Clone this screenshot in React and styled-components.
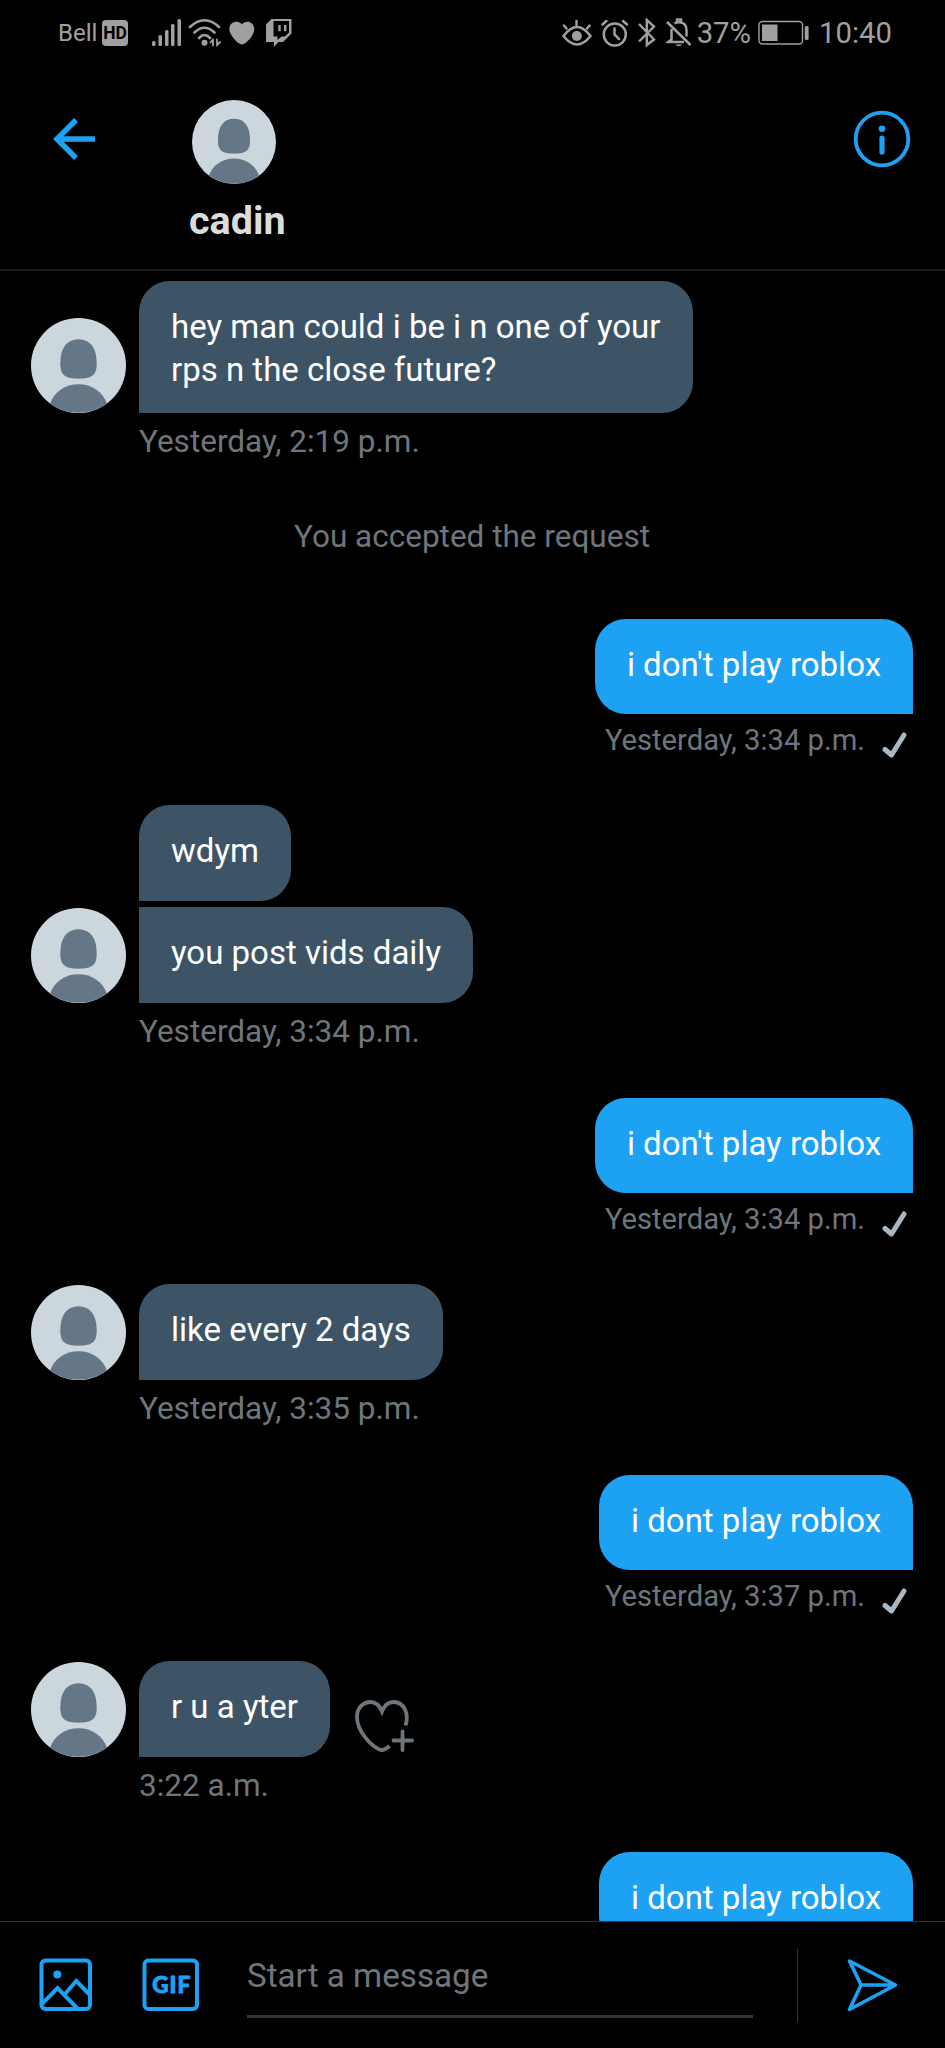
import React from "react"
import styled, { createGlobalStyle } from 'styled-components';

const GlobalStyle = createGlobalStyle`
* { box-sizing: border-box; }
body {
margin: 0;
background: #000;
font-family: Roboto, "Liberation Sans", sans-serif;
}
`;

const conversation = [
	{ id: 1, from: 'them', multiline: true, texts: ['hey man could i be i n one of your\nrps n the close future?'], time: 'Yesterday, 2:19 p.m.' },
	{ id: 2, notice: 'You accepted the request' },
	{ id: 3, from: 'me', texts: ["i don't play roblox"], time: 'Yesterday, 3:34 p.m.' },
	{ id: 4, from: 'them', texts: ['wdym', 'you post vids daily'], time: 'Yesterday, 3:34 p.m.' },
	{ id: 5, from: 'me', texts: ["i don't play roblox"], time: 'Yesterday, 3:34 p.m.' },
	{ id: 6, from: 'them', texts: ['like every 2 days'], time: 'Yesterday, 3:35 p.m.' },
	{ id: 7, from: 'me', texts: ['i dont play roblox'], time: 'Yesterday, 3:37 p.m.' },
	{ id: 8, from: 'them', texts: ['r u a yter'], time: '3:22 a.m.', react: true },
	{ id: 9, from: 'me', texts: ['i dont play roblox'] },
];

const Avatar = ({ size }) => (
	<StyledAvatar $size={size} viewBox="0 0 94 94">
		<circle cx="47" cy="47" r="47" fill="#ccd6dd" />
		<path d="M47 21c-12 0-18 9-18 24 0 11 4 15 18 15s18-4 18-15c0-15-6-24-18-24z" fill="#657786" />
		<path d="M19 84.600C23 73 34 65.500 47 65.500S71 73 75 84.600A47 47 0 0 1 19 84.600z" fill="#657786" />
	</StyledAvatar>
);

const StatusIcons = () => (
	<>
		<StyledIcon $w={30} $h={30} $ml={24} viewBox="0 0 30 30" fill="#a0a0a0">
			<rect x="0" y="23" width="3.500" height="5" rx="1.500" />
			<rect x="6.500" y="17" width="3.500" height="11" rx="1.500" />
			<rect x="13" y="12" width="3.500" height="16" rx="1.500" />
			<rect x="19" y="6" width="3.500" height="22" rx="1.500" />
			<rect x="25.500" y="1" width="3.500" height="27" rx="1.500" />
		</StyledIcon>
		<StyledIcon $w={34} $h={30} $ml={6} viewBox="0 0 34 30" fill="none" stroke="#a0a0a0" strokeWidth="2.600" strokeLinecap="round">
			<path d="M2 9Q16.500-4.500 31 9M6.500 14.500Q16.500 5 26.500 14.500M11 20Q16.500 14 22 20" />
			<circle cx="16.500" cy="24.700" r="3" fill="#a0a0a0" stroke="none" />
			<path d="M25 21.500v6M25 21.500l-2.500 3M29 21.500v6M29 27l3-3" strokeWidth="1.800" />
		</StyledIcon>
		<StyledIcon $w={26} $h={24} $ml={7} viewBox="0 0 26 24" fill="#a0a0a0">
			<path d="M13 3.500C10-1 1-.500 .300 7.500 0 14 9 23.500 13 23.500S26 14 25.200 7.500C24.500-.500 16-1 13 3.500z" />
		</StyledIcon>
		<StyledIcon $w={26} $h={30} $ml={11} viewBox="0 0 26 30" fill="#a0a0a0">
			<path fillRule="evenodd" d="M5.500 1H25.500V15.500L17 24H12.500L8 29V24H0V6.500zM7.500 3V18.500H11.500V22L15.500 18.500H19L23 14.500V3z" />
			<path d="M12.300 7h2.400v6.300h-2.400zM18 7h2.400v6.300H18z" />
		</StyledIcon>
	</>
);

const EyeIcon = () => (
	<StyledIcon $w={30} $h={28} viewBox="0 0 30 28" fill="none" stroke="#a0a0a0" strokeWidth="2.500" strokeLinecap="round">
		<path d="M1.500 17Q15-1 28.500 17Q15 34 1.500 17zM14.500 6V2M4.500 9.500L2 6.500M25 9.500l2.500-3" />
		<circle cx="14.800" cy="17" r="5" fill="#a0a0a0" stroke="none" />
	</StyledIcon>
);

const AlarmIcon = () => (
	<StyledIcon $w={28} $h={28} $ml={9} viewBox="0 0 28 28" fill="none" stroke="#a0a0a0" strokeWidth="2.500" strokeLinecap="round">
		<circle cx="13.800" cy="15.500" r="11" />
		<path d="M13.500 9.500v6l4.500 4.500M1.500 5.500L5.500 2M26 5.500L22 2" />
	</StyledIcon>
);

const BluetoothIcon = () => (
	<StyledIcon $w={20} $h={30} $ml={8} viewBox="0 0 20 30" fill="none" stroke="#a0a0a0" strokeWidth="2.400">
		<path d="M2 6L17 21.500L9.800 27V2L17 8.500L2 23.500" />
	</StyledIcon>
);

const MutedIcon = () => (
	<StyledIcon $w={26} $h={30} $ml={9} viewBox="0 0 26 30" fill="none" stroke="#a0a0a0" strokeWidth="2.500">
		<path d="M1 4L24.500 27M5.500 11V21.500L2 24H18M8.500 5.500C9.500 4.500 11 4.200 13 4.200C18 4.200 20.500 7.500 20.500 12V18.500M11 4V1.500h4V4" />
		<path d="M9.500 26.500h6.500c-.800 2.300-5.700 2.300-6.500 0z" fill="#a0a0a0" stroke="none" />
	</StyledIcon>
);

const BatteryIcon = () => (
	<StyledIcon $w={52} $h={26} $ml={7} viewBox="0 0 52 26" fill="none" stroke="#a0a0a0">
		<rect x="1" y="1.500" width="43.500" height="22.500" rx="3.500" strokeWidth="1.400" />
		<rect x="4" y="4.500" width="15.500" height="16.500" fill="#a0a0a0" stroke="none" />
		<rect x="46.800" y="6" width="3.800" height="14" rx="1.500" fill="#a0a0a0" stroke="none" />
	</StyledIcon>
);

const HeartPlus = () => (
	<StyledHeart viewBox="0 0 60 54" fill="none" stroke="#6e767d" strokeWidth="3.800">
		<path d="M50.500 25.500C54 15 50 2 38.500 2C33 2 29.500 5.500 27 11.500C24.500 5.500 21 2 15.500 2C8 2 2 8 2 17C2 31 16 46 24.500 49.500C27.500 51 31 49 34.500 46" />
		<path d="M47.500 31.500V50M38.500 40.500H57" strokeLinecap="round" />
	</StyledHeart>
);

const Message = ({ item }) => {
	if (item.notice) {
		return <StyledNotice>{item.notice}</StyledNotice>
	}
	if (item.from === 'me') {
		return (
			<StyledSent>
				{item.texts.map((text) => <StyledSentBubble key={text}>{text}</StyledSentBubble>)}
				{item.time && (
					<StyledSentTime>
						{item.time}
						<StyledCheck viewBox="0 0 26 28" fill="none" stroke="#aab8c2" strokeWidth="5" strokeLinecap="round" strokeLinejoin="round">
							<path d="M3 18.500L9.500 24L22 4" />
						</StyledCheck>
					</StyledSentTime>
				)}
			</StyledSent>
		)
	}
	return (
		<StyledReceived>
			<StyledReceivedRow>
				<Avatar size={95} />
				<StyledStack>
					{item.texts.map((text, i) => (
						<StyledReceivedBubble key={text} $first={i === 0} $multiline={item.multiline}>{text}</StyledReceivedBubble>
					))}
				</StyledStack>
				{item.react && <HeartPlus />}
			</StyledReceivedRow>
			<StyledReceivedTime>{item.time}</StyledReceivedTime>
		</StyledReceived>
	)
}

export default function App() {
	return (
		<>
			<GlobalStyle />
			<StyledScreen>
				<StyledStatusBar>
					<StyledCarrier>Bell</StyledCarrier>
					<StyledHd>HD</StyledHd>
					<StatusIcons />
					<StyledStatusRight>
						<EyeIcon />
						<AlarmIcon />
						<BluetoothIcon />
						<MutedIcon />
						<StyledStatusText $ml={5}>37%</StyledStatusText>
						<BatteryIcon />
						<StyledStatusText $ml={9}>10:40</StyledStatusText>
					</StyledStatusRight>
				</StyledStatusBar>
				<StyledHeader>
					<StyledBack viewBox="0 0 44 42" fill="none" stroke="#1da1f2" strokeWidth="5.500">
						<path d="M43 21H5M24 2L5 21L24 40" />
					</StyledBack>
					<StyledProfile>
						<StyledProfilePicture>
							<Avatar size={84} />
						</StyledProfilePicture>
						<StyledName>cadin</StyledName>
					</StyledProfile>
					<StyledInfo viewBox="0 0 58 58" fill="none" stroke="#1da1f2">
						<circle cx="29" cy="29" r="26.300" strokeWidth="3.800" />
						<circle cx="29" cy="18.800" r="3.300" fill="#1da1f2" stroke="none" />
						<path d="M29 28.200V42" strokeWidth="5.200" strokeLinecap="round" />
					</StyledInfo>
				</StyledHeader>
				<StyledThread>
					{conversation.map((item) => <Message key={item.id} item={item} />)}
				</StyledThread>
				<StyledComposer>
					<StyledTool $w={54} $ml={39} viewBox="0 0 54 54" fill="none" stroke="#1da1f2" strokeWidth="4">
						<rect x="2.500" y="2.500" width="48.500" height="48.500" rx="4" />
						<circle cx="18.300" cy="16.500" r="4" fill="#1da1f2" stroke="none" />
						<path d="M3 46L18.500 30L39 51M25.500 36.500L37.300 23L51 37" />
					</StyledTool>
					<StyledTool $w={58} $ml={49} viewBox="0 0 58 54" fill="none" stroke="#1da1f2" strokeWidth="4">
						<rect x="2.500" y="2.500" width="52.500" height="48.500" rx="4" />
						<text x="29.200" y="34.500" fontFamily="Lato" fontWeight="900" fontSize="22.500" textAnchor="middle" textLength="38" fill="#1da1f2" strokeWidth="1">GIF</text>
					</StyledTool>
					<StyledInput>Start a message</StyledInput>
					<StyledDivider />
					<StyledTool $w={52} $ml={48} viewBox="0 0 52 54" fill="none" stroke="#1da1f2" strokeWidth="3.600" strokeLinejoin="round">
						<path d="M3.500 3L49.500 27L3.500 51.500L15 27zM15 27H49" />
					</StyledTool>
				</StyledComposer>
			</StyledScreen>
		</>
	);
}

const StyledScreen = styled.div`
width: 945px;
height: 2048px;
display: flex;
flex-direction: column;
overflow: hidden;
background: #000;
`;

const StyledStatusBar = styled.div`
height: 66px;
padding-left: 58px;
display: flex;
align-items: center;
color: #a0a0a0;
`;

const StyledCarrier = styled.div`
width: 44px;
font-size: 24px;
`;

const StyledHd = styled.div`
width: 26px;
height: 26px;
border-radius: 4px;
background: #a0a0a0;
color: #000;
font-size: 17.5px;
font-weight: 700;
line-height: 27px;
text-align: center;
`;

const StyledStatusRight = styled.div`
display: flex;
align-items: center;
margin-left: auto;
padding-right: 53px;
`;

const StyledStatusText = styled.div`
margin-left: ${(p) => p.$ml}px;
font-size: 29.3px;
line-height: 36px;
`;

const StyledIcon = styled.svg`
width: ${(p) => p.$w}px;
height: ${(p) => p.$h}px;
margin-left: ${(p) => p.$ml || 0}px;
flex: none;
`;

const StyledHeader = styled.div`
height: 205px;
display: flex;
align-items: flex-start;
border-bottom: 2px solid #1a1b1c;
`;

const StyledBack = styled.svg`
width: 44px;
height: 42px;
margin: 52px 0 0 52px;
`;

const StyledProfile = styled.div`
margin: 34px 0 0 93px;
display: flex;
flex-direction: column;
`;

const StyledProfilePicture = styled.div`
display: flex;
padding-left: 3px;
`;

const StyledName = styled.div`
margin-top: 14px;
font-size: 39.5px;
line-height: 46px;
font-weight: 700;
color: #dcdcdc;
`;

const StyledInfo = styled.svg`
width: 58px;
height: 58px;
margin: 44px 34px 0 auto;
`;

const StyledAvatar = styled.svg`
width: ${(p) => p.$size}px;
height: ${(p) => p.$size}px;
flex: none;
`;

const StyledThread = styled.div`
flex: 1;
min-height: 0;
overflow: hidden;
padding: 10px 32px 0 31px;
`;

const StyledReceived = styled.div`
display: flex;
flex-direction: column;
`;

const StyledReceivedRow = styled.div`
display: flex;
align-items: flex-end;
`;

const StyledStack = styled.div`
display: flex;
flex-direction: column;
align-items: flex-start;
gap: 6px;
margin-left: 13px;
`;

const StyledBubble = styled.div`
padding: 24px 32px 0;
font-size: 33px;
line-height: 43px;
white-space: pre;
color: #fff;
`;

const StyledReceivedBubble = styled(StyledBubble)`
height: ${(p) => (p.$multiline ? 132 : 96)}px;
background: #3d5466;
border-radius: ${(p) => (p.$first ? '31px' : '0')} 31px 31px 0;
`;

const StyledSent = styled.div`
height: 186px;
display: flex;
flex-direction: column;
align-items: flex-end;
`;

const StyledSentBubble = styled(StyledBubble)`
height: 95px;
background: #1da1f2;
border-radius: 31px 31px 0 31px;
`;

const StyledReceivedTime = styled.div`
height: 95px;
padding: 9px 0 0 108px;
font-size: 31.5px;
line-height: 40px;
color: #6e767d;
`;

const StyledSentTime = styled.div`
display: flex;
align-items: flex-start;
padding-top: 7px;
font-size: 29.2px;
line-height: 38px;
color: #6e767d;
`;

const StyledCheck = styled.svg`
width: 26px;
height: 28px;
margin: 10px 5px 0 17px;
`;

const StyledNotice = styled.div`
height: 111px;
padding-top: 9px;
text-align: center;
font-size: 31.5px;
line-height: 40px;
color: #6e767d;
`;

const StyledHeart = styled.svg`
width: 60px;
height: 54px;
margin: 0 0 3px 25px;
`;

const StyledComposer = styled.div`
height: 127px;
display: flex;
align-items: flex-start;
border-top: 1px solid #2f3336;
`;

const StyledTool = styled.svg`
width: ${(p) => p.$w}px;
height: 54px;
margin: 36px 0 0 ${(p) => p.$ml}px;
flex: none;
`;

const StyledInput = styled.div`
width: 506px;
height: 66px;
margin: 30px 0 0 47px;
font-size: 33.2px;
line-height: 48px;
color: #6e767d;
border-bottom: 3px solid #333;
`;

const StyledDivider = styled.div`
width: 1px;
height: 74px;
margin: 26px 0 0 44px;
background: #2f3336;
`;
